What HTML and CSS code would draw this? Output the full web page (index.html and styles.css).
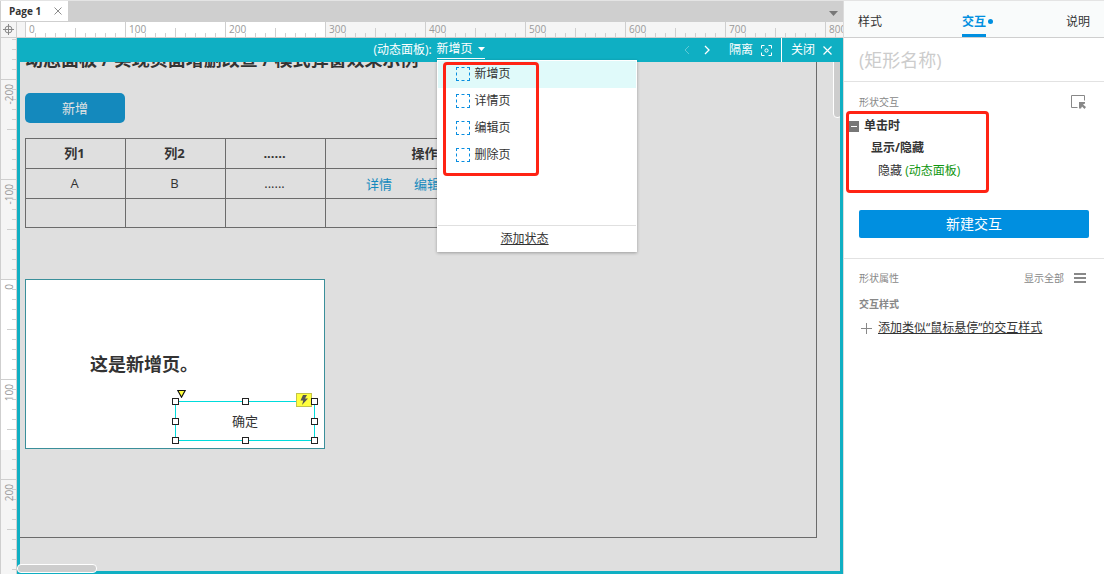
FILE: index.html
```
<!DOCTYPE html>
<html lang="zh-CN">
<head>
    <meta charset="UTF-8">
    <meta name="viewport" content="width=device-width, initial-scale=1.0">
    <title>Page 1</title>
    <link rel="stylesheet" href="styles.css">
</head>
<body>

<div class="app">
    <main class="workspace">
        <div class="page-tabs">
            <div class="page-tab">
                <span>Page 1</span>
                <button class="icon-button" aria-label="关闭标签">
                    <svg width="8" height="8" viewBox="0 0 8 8"><path d="M0.5 0.5L7.5 7.5M7.5 0.5L0.5 7.5" stroke="#8c8c8c" fill="none"/></svg>
                </button>
            </div>
            <button class="icon-button tab-list" aria-label="全部标签">
                <svg width="9" height="5" viewBox="0 0 9 5"><path d="M0 0H9L4.5 5Z" fill="#777"/></svg>
            </button>
        </div>

        <div class="ruler-row">
            <div class="origin">
                <svg width="11" height="11" viewBox="0 0 11 11" fill="none" stroke="#888"><circle cx="5.5" cy="5.5" r="3.5"/><path d="M5.5 0V11M0 5.5H11"/></svg>
            </div>
            <div class="ruler-x">
                <div class="mark marked">0</div>
                <div class="mark marked">100</div>
                <div class="mark marked">200</div>
                <div class="mark">300</div>
                <div class="mark">400</div>
                <div class="mark">500</div>
                <div class="mark">600</div>
                <div class="mark">700</div>
                <div class="mark">800</div>
            </div>
        </div>

        <div class="stage-row">
            <div class="ruler-y">
                <div class="mark-y first"></div>
                <div class="mark-y"><span>-200</span></div>
                <div class="mark-y"><span>-100</span></div>
                <div class="mark-y marked"><span>0</span></div>
                <div class="mark-y half-marked"><span>100</span></div>
                <div class="mark-y"><span>200</span></div>
            </div>

            <div class="stage">
                <header class="state-bar">
                    <div class="state-picker">
                        <span>(动态面板):</span>
                        <div class="state-select">
                            <button class="state-current">
                                新增页
                                <svg width="7" height="4" viewBox="0 0 7 4"><path d="M0 0H7L3.5 4Z" fill="#fff"/></svg>
                            </button>
                            <div class="state-menu">
                                <ul>
                                    <li class="selected"><i class="state-icon"></i>新增页</li>
                                    <li><i class="state-icon"></i>详情页</li>
                                    <li><i class="state-icon"></i>编辑页</li>
                                    <li><i class="state-icon"></i>删除页</li>
                                </ul>
                                <div class="menu-footer"><a href="#">添加状态</a></div>
                                <div class="highlight menu-highlight"></div>
                            </div>
                        </div>
                    </div>
                    <div class="state-actions">
                        <button class="icon-button prev" aria-label="上一个状态">
                            <svg width="6" height="10" viewBox="0 0 6 10"><path d="M5 1L1 5L5 9" stroke="#5fc9d5" fill="none"/></svg>
                        </button>
                        <button class="icon-button next" aria-label="下一个状态">
                            <svg width="6" height="10" viewBox="0 0 6 10"><path d="M1 1L5 5L1 9" stroke="#fff" stroke-width="1.3" fill="none"/></svg>
                        </button>
                        <button class="bar-button isolate">
                            隔离
                            <svg width="11" height="11" viewBox="0 0 11 11" fill="none" stroke="#fff"><path d="M0.5 3.5V0.5H3.5M7.5 0.5H10.5V3.5M10.5 7.5V10.5H7.5M3.5 10.5H0.5V7.5"/><circle cx="5.5" cy="5.5" r="1.6"/></svg>
                        </button>
                        <button class="bar-button close">
                            关闭
                            <svg width="9" height="9" viewBox="0 0 9 9"><path d="M0.5 0.5L8.5 8.5M8.5 0.5L0.5 8.5" stroke="#fff" stroke-width="1.2" fill="none"/></svg>
                        </button>
                    </div>
                </header>

                <div class="canvas">
                    <div class="page-frame"></div>
                    <h1 class="page-title">动态面板 / 实现页面增删改查 / 模式弹窗效果示例</h1>
                    <button class="add-button">新增</button>
                    <table class="data-table">
                        <tr>
                            <th>列1</th>
                            <th>列2</th>
                            <th>......</th>
                            <th class="ops">操作</th>
                        </tr>
                        <tr>
                            <td>A</td>
                            <td>B</td>
                            <td>......</td>
                            <td class="ops"><a href="#">详情</a><a href="#">编辑</a><a href="#">删除</a></td>
                        </tr>
                        <tr class="empty">
                            <td></td>
                            <td></td>
                            <td></td>
                            <td></td>
                        </tr>
                    </table>

                    <div class="dialog">
                        <p class="dialog-text">这是新增页。</p>
                        <div class="selection">
                            <button class="confirm">确定</button>
                            <svg class="corner-mark" width="9" height="8" viewBox="0 0 9 8"><path d="M0.8 0.5H8.2L4.5 7.2Z" fill="#ffff3d" stroke="#111" stroke-width="1.2"/></svg>
                            <span class="event-badge">
                                <svg width="8" height="10" viewBox="0 0 8 10"><path d="M3 0H7L5 3.4H8L2 10L3.3 5.6H0.5Z" fill="#555"/></svg>
                            </span>
                            <i class="handle top left"></i>
                            <i class="handle top center"></i>
                            <i class="handle top right"></i>
                            <i class="handle middle left"></i>
                            <i class="handle middle right"></i>
                            <i class="handle bottom left"></i>
                            <i class="handle bottom center"></i>
                            <i class="handle bottom right"></i>
                        </div>
                    </div>
                    <div class="scroll-y"></div>
                </div>
                <div class="scroll-x"></div>
            </div>
        </div>
    </main>

    <aside class="inspector">
        <nav class="inspector-tabs">
            <a href="#">样式</a>
            <a href="#" class="active">交互</a>
            <a href="#">说明</a>
        </nav>

        <div class="name-row">
            <input type="text" class="name-input" placeholder="(矩形名称)" aria-label="矩形名称">
        </div>

        <section class="interactions">
            <div class="section-head">
                <h2>形状交互</h2>
                <button class="icon-button" aria-label="选择目标">
                    <svg width="15" height="14" viewBox="0 0 15 14" fill="none"><path d="M6.5 12.5H0.5V0.5H13.5V5.5" stroke="#888"/><path d="M8 7H14V8.5L12 9.5L15 12L13.5 14L11 11.5L10 13.5H8Z" fill="#888"/></svg>
                </button>
            </div>
            <div class="event-tree">
                <div class="event-name"><button class="toggle" aria-label="折叠"></button>单击时</div>
                <div class="event-action">显示/隐藏</div>
                <div class="event-target">隐藏 <span>(动态面板)</span></div>
                <div class="highlight event-highlight"></div>
            </div>
            <button class="new-interaction">新建交互</button>
        </section>

        <section class="properties">
            <div class="section-head">
                <h2>形状属性</h2>
                <button class="show-all">
                    显示全部
                    <svg width="12" height="10" viewBox="0 0 12 10"><path d="M0 1H12M0 5H12M0 9H12" stroke="#888" stroke-width="2"/></svg>
                </button>
            </div>
            <h3>交互样式</h3>
            <div class="add-style">
                <svg width="11" height="11" viewBox="0 0 11 11"><path d="M5.5 0V11M0 5.5H11" stroke="#888"/></svg>
                <a href="#">添加类似“鼠标悬停”的交互样式</a>
            </div>
        </section>
    </aside>
</div>

</body>
</html>
```

FILE: styles.css
```
* {
    box-sizing: border-box;
}

body {
    margin: 0;
    font-family: "Open Sans", "Noto Sans CJK SC", sans-serif;
    font-size: 12px;
    line-height: 18px;
    color: #333;
}

button {
    font: inherit;
    color: inherit;
    background: none;
    border: none;
    padding: 0;
}

h1, h2, h3, p, ul {
    margin: 0;
    padding: 0;
}

svg {
    display: block;
    flex: none;
}

a {
    color: inherit;
}

.app {
    display: grid;
    grid-template-columns: minmax(0, 1fr) 261px;
    height: 100vh;
    border-top: 1px solid #e4e4e4;
    overflow: hidden;
}

.icon-button {
    display: flex;
}

/* Workspace */

.workspace {
    display: flex;
    flex-direction: column;
    min-width: 0;
    min-height: 0;
}

.page-tabs {
    display: flex;
    justify-content: space-between;
    height: 20px;
    background: #cfcfcf;
    border-left: 1px solid #cfcfcf;
}

.page-tab {
    display: flex;
    align-items: center;
    gap: 13px;
    padding: 0 6px 0 8px;
    background: #fff;
    font-size: 10px;
    font-weight: bold;
}

.tab-list {
    align-self: flex-end;
    padding: 0 5px 5px;
}

.ruler-row {
    display: flex;
    flex: none;
    height: 17px;
    background: #f5f5f5;
    border-top: 1px solid #cfcfcf;
    border-bottom: 1px solid #cfcfcf;
    border-left: 1px solid #cfcfcf;
}

.origin {
    display: grid;
    place-items: center;
    flex: none;
    width: 16px;
    border-right: 1px solid #cfcfcf;
}

.ruler-x {
    display: flex;
    flex: 1;
    min-width: 0;
    padding-left: 8px;
    overflow: hidden;
}

.mark {
    flex: none;
    width: 100px;
    padding-left: 3px;
    border-left: 1px solid #cfcfcf;
    background:
        linear-gradient(#cfcfcf, #cfcfcf) 49px 100% / 1px 9px no-repeat,
        repeating-linear-gradient(90deg, transparent 0 9px, #cfcfcf 9px 10px) 0 100% / 99px 4px no-repeat;
    font-size: 10px;
    line-height: 15px;
    color: #999;
}

.marked {
    background-color: #fff;
}

.stage-row {
    display: flex;
    flex: 1;
    min-height: 0;
}

.ruler-y {
    flex: none;
    width: 17px;
    background: #f5f5f5;
    border-left: 1px solid #cfcfcf;
    border-right: 1px solid #cfcfcf;
    overflow: hidden;
}

.mark-y {
    height: 100px;
    padding: 4px 0 0 2px;
    border-top: 1px solid #cfcfcf;
    background-image:
        linear-gradient(#cfcfcf, #cfcfcf),
        repeating-linear-gradient(180deg, transparent 0 9px, #cfcfcf 9px 10px),
        linear-gradient(#fff, #fff);
    background-position: 100% 49px, 100% 0, 0 0;
    background-size: 9px 1px, 4px 99px, 0 0;
    background-repeat: no-repeat;
    font-size: 10px;
    line-height: 12px;
    color: #999;
}

.mark-y span {
    display: block;
    writing-mode: vertical-rl;
    transform: rotate(180deg);
}

.mark-y.first {
    height: 41px;
    border-top: none;
    background-image: repeating-linear-gradient(0deg, transparent 0 9px, #cfcfcf 9px 10px);
    background-position: 100% 100%;
    background-size: 4px 41px;
}

.mark-y.half-marked {
    background-size: 9px 1px, 4px 99px, 100% 70px;
}

.stage {
    display: flex;
    flex-direction: column;
    position: relative;
    flex: 1;
    min-width: 0;
    border: 3px solid #0fafc3;
    border-top: none;
}

.state-bar {
    display: grid;
    grid-template-columns: 1fr auto 1fr;
    align-items: stretch;
    height: 24px;
    flex: none;
    background: #0fafc3;
    color: #fff;
    line-height: 24px;
}

.state-picker {
    display: flex;
    grid-column: 2;
    gap: 5px;
    padding-right: 2px;
}

.state-select {
    position: relative;
}

.state-current {
    display: flex;
    align-items: center;
    gap: 5px;
    height: 21px;
    padding-top: 2px;
    border-bottom: 1px solid #fff;
}

.state-menu {
    display: flex;
    flex-direction: column;
    position: absolute;
    z-index: 2;
    top: 22px;
    left: 0;
    width: 200px;
    height: 192px;
    background: #fff;
    border: 1px solid #fff;
    box-shadow: 0 1px 3px rgba(0, 0, 0, 0.3);
    color: #333;
}

.state-menu ul {
    flex: 1;
    list-style: none;
}

.state-menu li {
    display: flex;
    align-items: center;
    gap: 5px;
    height: 27px;
    padding: 0 0 1px 18px;
}

.state-menu .selected {
    background: #e0fafa;
}

.state-icon {
    width: 14px;
    height: 14px;
    border: 1px dashed #0a8ee0;
}

.menu-footer {
    height: 26px;
    padding: 1px 0 0 63px;
    border-top: 1px solid #e0e0e0;
}

.highlight {
    position: absolute;
    border: 3px solid #ff2314;
    border-radius: 4px;
    pointer-events: none;
}

.menu-highlight {
    top: 1px;
    left: 5px;
    width: 96px;
    height: 114px;
}

.state-actions {
    display: flex;
    justify-content: flex-end;
}

.state-actions .icon-button {
    align-items: center;
}

.next {
    margin: 0 19px 0 14px;
}

.bar-button {
    display: flex;
    align-items: center;
    gap: 8px;
}

.isolate {
    padding-right: 9px;
    border-right: 1px solid #fff;
}

.close {
    padding: 0 8px 0 9px;
}

/* Canvas: everything sits at its page coordinates */

.canvas {
    position: relative;
    flex: 1;
    min-height: 0;
    background: #dfdfdf;
    overflow: hidden;
    font-size: 13px;
}

.page-frame {
    position: absolute;
    top: -20px;
    left: -20px;
    width: 817px;
    height: 496px;
    border: 1px solid #6b6b6b;
}

.page-title {
    position: absolute;
    top: -15px;
    left: 5px;
    font-size: 18px;
    line-height: 24px;
    white-space: nowrap;
}

.add-button {
    position: absolute;
    top: 31px;
    left: 5px;
    width: 100px;
    height: 30px;
    border-radius: 5px;
    background: #1489bd;
    color: #e4e4e4;
}

.data-table {
    position: absolute;
    top: 76px;
    left: 5px;
    width: 501px;
    table-layout: fixed;
    border-collapse: collapse;
    text-align: center;
}

.data-table th,
.data-table td {
    height: 30px;
    padding: 0 2px 2px 0;
    border: 1px solid #6b6b6b;
}

.data-table .empty td {
    height: 29px;
}

.data-table .ops {
    width: 200px;
}

.data-table td.ops {
    padding: 0 0 0 3px;
}

.data-table a {
    margin: 0 11px;
    color: #1489bd;
    text-decoration: none;
}

.dialog {
    position: absolute;
    top: 217px;
    left: 5px;
    width: 300px;
    height: 170px;
    background: #fff;
    border: 1px solid #3a8f9a;
}

.dialog-text {
    position: absolute;
    top: 72px;
    left: 64px;
    font-size: 18px;
    line-height: 24px;
    font-weight: bold;
}

.selection {
    position: absolute;
    top: 121px;
    left: 149px;
    width: 140px;
    height: 40px;
}

.confirm {
    width: 100%;
    height: 100%;
    border: 1px solid #00dcdc;
    background: #fff;
}

.corner-mark {
    position: absolute;
    top: -11px;
    left: 2px;
}

.event-badge {
    display: grid;
    place-items: center;
    position: absolute;
    top: -8px;
    right: 3px;
    width: 16px;
    height: 14px;
    background: #ffff3d;
    border: 1px solid #c3c34b;
}

.handle {
    position: absolute;
    width: 7px;
    height: 7px;
    background: #fff;
    border: 1px solid #222;
}

.handle.top { top: -3px; }
.handle.middle { top: 17px; }
.handle.bottom { bottom: -3px; }
.handle.left { left: -3px; }
.handle.center { left: 67px; }
.handle.right { right: -3px; }

.scroll-x,
.scroll-y {
    position: absolute;
    background: #cdcdcd;
    border: 1px solid #fff;
    border-radius: 4px;
}

.scroll-y {
    top: -4px;
    right: -2px;
    width: 9px;
    height: 60px;
}

.scroll-x {
    bottom: -2px;
    left: -3px;
    width: 80px;
    height: 9px;
}

/* Inspector */

.inspector {
    background: #fff;
    border-left: 1px solid #dcdcdc;
}

.inspector-tabs {
    display: flex;
    justify-content: space-between;
    height: 37px;
    padding: 0 14px;
    background: #f9fbfb;
    border-bottom: 1px solid #cfcfcf;
    line-height: 42px;
}

.inspector-tabs a {
    text-decoration: none;
}

.inspector-tabs .active {
    position: relative;
    border-bottom: 3px solid #008fe0;
    color: #008fe0;
    font-weight: bold;
}

.inspector-tabs .active::after {
    content: "";
    position: absolute;
    top: 18px;
    left: 26px;
    width: 5px;
    height: 5px;
    border-radius: 50%;
    background: #008fe0;
}

.name-row {
    height: 44px;
    border-bottom: 1px solid #e2e2e2;
}

.name-input {
    width: 100%;
    height: 43px;
    padding: 0 15px;
    border: none;
    background: none;
    font: inherit;
    font-size: 18px;
}

.name-input::placeholder {
    color: #ccc;
}

.interactions {
    padding: 11px 15px 20px;
    border-bottom: 1px solid #e2e2e2;
}

.section-head {
    display: flex;
    justify-content: space-between;
    align-items: center;
    height: 18px;
    padding-right: 3px;
}

h2, h3, .show-all {
    font-size: 10px;
    font-weight: normal;
    color: #888;
}

.event-tree {
    position: relative;
    height: 99px;
    padding-top: 4px;
}

.event-name,
.event-action {
    height: 22px;
    line-height: 22px;
    font-weight: bold;
}

.event-name {
    display: flex;
    align-items: center;
    gap: 5px;
    margin-left: -10px;
}

.toggle {
    display: grid;
    place-items: center;
    width: 10px;
    height: 11px;
    background: #777;
}

.toggle::before {
    content: "";
    width: 6px;
    height: 1px;
    background: #fff;
}

.event-action {
    padding-left: 12px;
}

.event-target {
    padding-left: 19px;
    line-height: 24px;
}

.event-target span {
    color: #0f960f;
}

.event-highlight {
    top: 0;
    left: -13px;
    width: 143px;
    height: 82px;
}

.new-interaction {
    width: 100%;
    height: 28px;
    border-radius: 2px;
    background: #008fe0;
    color: #fff;
    font-size: 14px;
}

.properties {
    padding: 10px 15px;
}

.show-all {
    display: flex;
    align-items: center;
    gap: 10px;
}

h3 {
    margin: 8px 0 6px;
    font-weight: 600;
}

.add-style {
    display: flex;
    align-items: center;
    gap: 6px;
    padding-left: 2px;
}
```
